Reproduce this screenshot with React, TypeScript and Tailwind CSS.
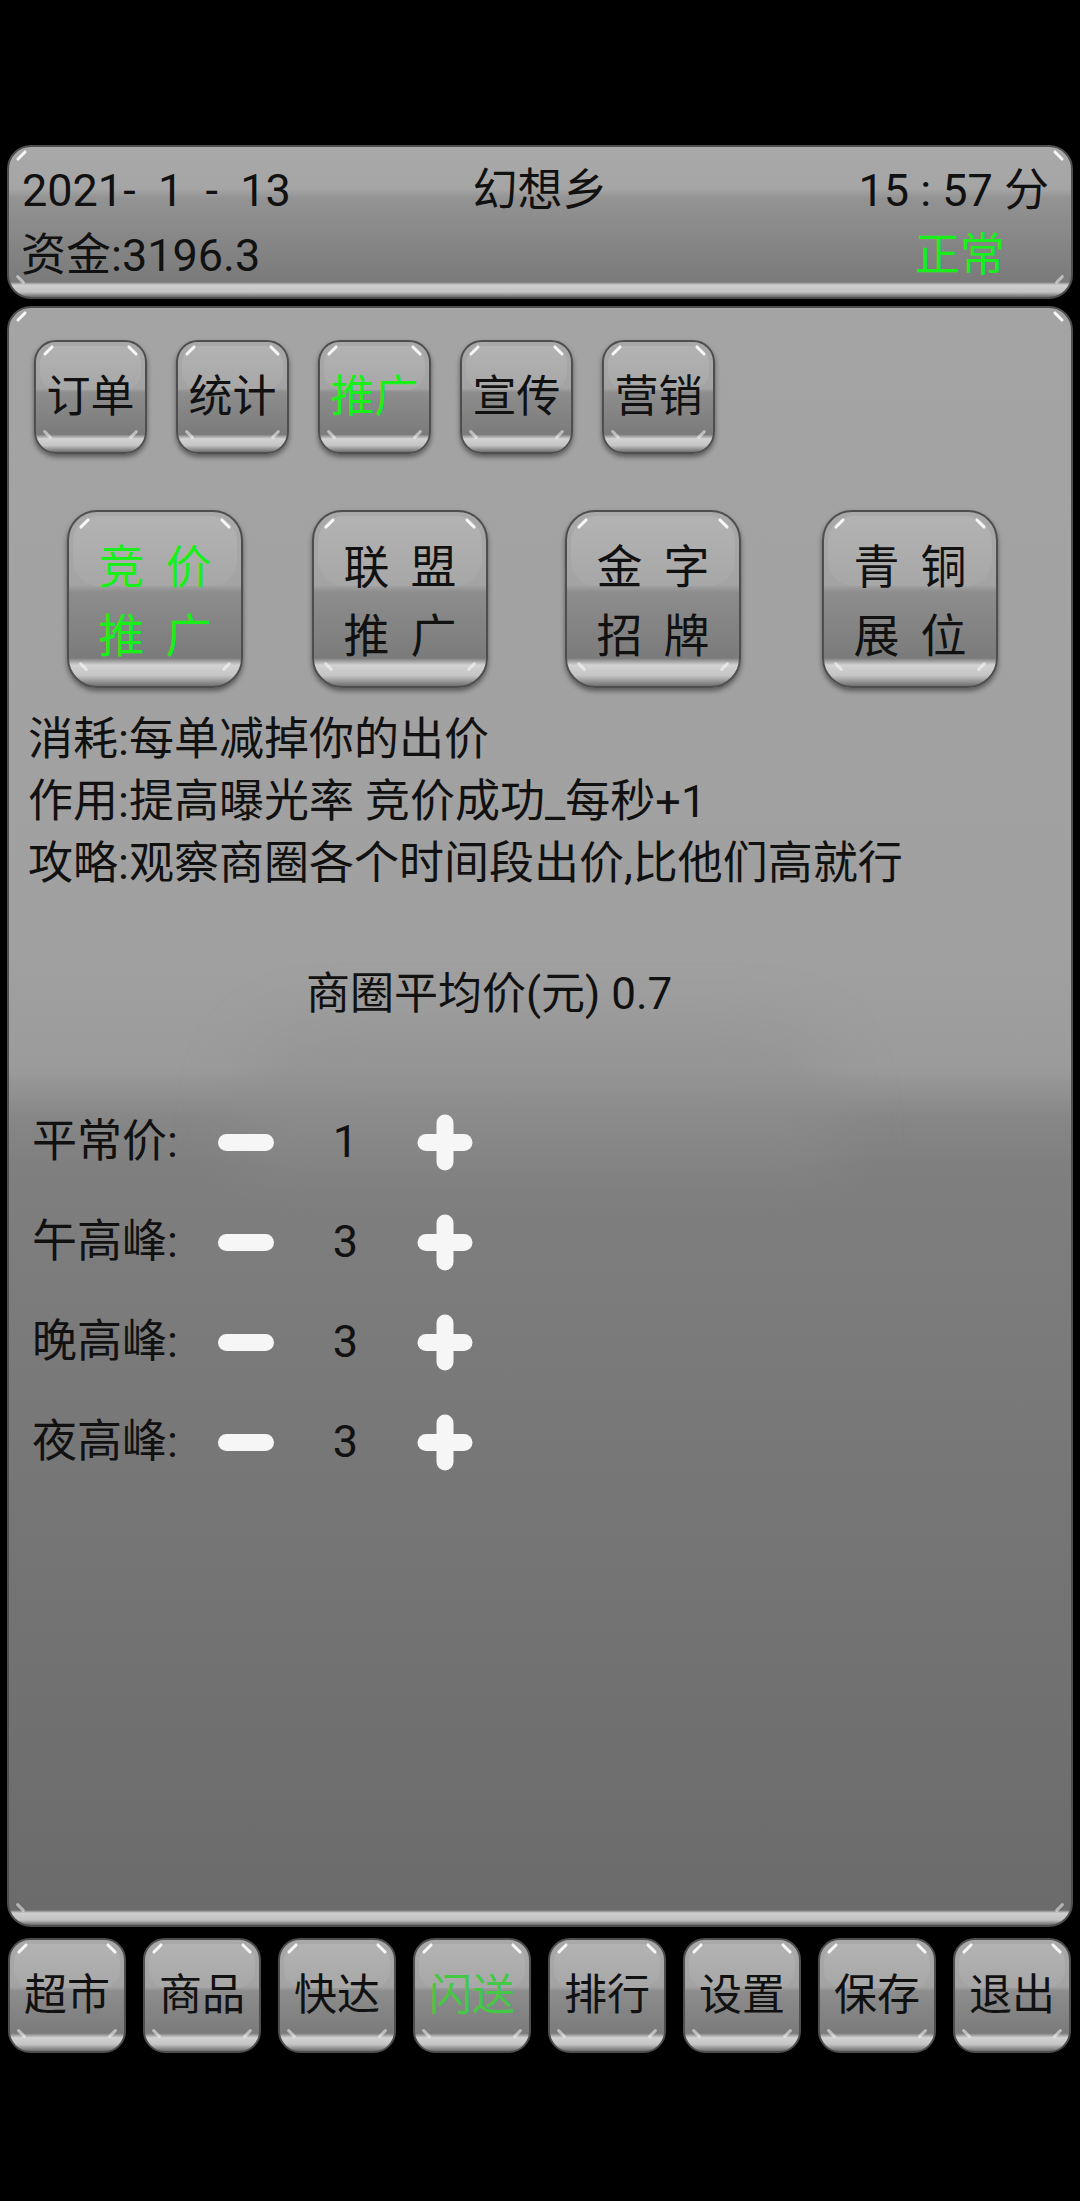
import { ReactNode } from 'react';
import clsx from 'clsx';

const GREEN = 'text-[#19f019]';

/** Little white slashes that sit on the rounded corners of the glossy skins */
function CornerShine({ big = false }: { big?: boolean }) {
  return (
    <>
      <div
        className={clsx(
          'absolute w-[13px] h-[3px] rounded-full -rotate-45 bg-white/90',
          big ? 'left-[9px] top-[10px]' : 'left-[6px] top-[7px]',
        )}
      />
      <div
        className={clsx(
          'absolute w-[13px] h-[3px] rounded-full rotate-45 bg-white/90',
          big ? 'right-[9px] top-[10px]' : 'right-[6px] top-[7px]',
        )}
      />
      <div
        className={clsx(
          'absolute w-[11px] h-[3px] rounded-full rotate-45 bg-white/50',
          big ? 'left-[9px] bottom-[18px]' : 'left-[6px] bottom-[16px]',
        )}
      />
      <div
        className={clsx(
          'absolute w-[11px] h-[3px] rounded-full -rotate-45 bg-white/50',
          big ? 'right-[9px] bottom-[18px]' : 'right-[6px] bottom-[16px]',
        )}
      />
    </>
  );
}

/** Glossy grey key used for every button in the game */
function GlossKey({
  children,
  className,
  big = false,
}: {
  children: ReactNode;
  className?: string;
  big?: boolean;
}) {
  return (
    <div
      className={clsx(
        'relative shrink-0 border-2 border-[#4e4e4e] shadow-[0_3px_5px_rgba(0,0,0,0.45)] overflow-hidden',
        'bg-[linear-gradient(to_bottom,#a9a9a9_0%,#a3a3a3_42%,#8d8d8d_46%,#7b7b7b_84%,#d2d2d2_88%,#c4c4c4_94%,#707070_100%)]',
        big ? 'rounded-[30px]' : 'rounded-[22px]',
        className,
      )}
    >
      <div
        className={clsx(
          'absolute inset-x-[4px] top-[4px] h-[40%] bg-[linear-gradient(to_bottom,#b3b3b3,#a7a7a7)]',
          big ? 'rounded-[26px]' : 'rounded-[18px]',
        )}
      />
      <CornerShine big={big} />
      <div className="relative h-full w-full flex flex-col items-center justify-center">{children}</div>
    </div>
  );
}

function Minus() {
  return <div className="w-[56px] h-[17px] rounded-full bg-[#f6f6f6]" />;
}

function Plus() {
  return (
    <svg width="56" height="57" viewBox="0 0 56 57">
      <g stroke="#f6f6f6" strokeWidth="17" strokeLinecap="round">
        <line x1="9" y1="28.5" x2="47" y2="28.5" />
        <line x1="28" y1="9" x2="28" y2="48" />
      </g>
    </svg>
  );
}

const tabs = ['订单', '统计', '推广', '宣传', '营销'];
const promos = [
  ['竞价', '推广'],
  ['联盟', '推广'],
  ['金字', '招牌'],
  ['青铜', '展位'],
];
const promoGap = ['ml-0', 'ml-[69px]', 'ml-[77px]', 'ml-[81px]'];
const prices = [
  { label: '平常价:', value: 1 },
  { label: '午高峰:', value: 3 },
  { label: '晚高峰:', value: 3 },
  { label: '夜高峰:', value: 3 },
];
const nav = ['超市', '商品', '快达', '闪送', '排行', '设置', '保存', '退出'];

function SpacedPair({ text }: { text: string }) {
  return (
    <div className="flex gap-[21px] h-[69px] items-center">
      {text.split('').map((c) => (
        <span key={c}>{c}</span>
      ))}
    </div>
  );
}

export default function App() {
  return (
    <div className="w-[1080px] h-[2201px] bg-black pt-[145px] px-[7px] font-['Roboto','Noto_Sans_CJK_SC',sans-serif] text-[#111]">
      {/* status header */}
      <div className="relative h-[154px] rounded-[24px] border-2 border-[#4e4e4e] overflow-hidden bg-[linear-gradient(to_bottom,#a9a9a9_0%,#a5a5a5_28%,#939393_34%,#7a7a7a_calc(100%_-_15px),#cfcfcf_calc(100%_-_12px),#c2c2c2_calc(100%_-_5px),#6a6a6a_100%)]">
        <CornerShine />
        <div className="relative grid grid-cols-3 items-center h-[60px] mt-[14px] px-[13px] text-[45px]">
          <span className="leading-[60px] whitespace-pre">2021-  1  -  13</span>
          <span className="leading-[60px] text-center">幻想乡</span>
          <span className="leading-[60px] text-right pr-[9px] whitespace-pre">15 : 57 分</span>
        </div>
        <div className="relative flex items-center justify-between h-[60px] mt-[5px] pl-[12px] pr-[66px] text-[45px]">
          <span className="leading-[60px]">资金:3196.3</span>
          <span className={clsx('leading-[60px]', GREEN)}>正常</span>
        </div>
      </div>

      {/* main panel */}
      <div className="relative mt-[7px] h-[1621px] rounded-[24px] border-2 border-[#4e4e4e] overflow-hidden bg-[linear-gradient(to_bottom,#a4a4a4_0%,#a0a0a0_40%,#9b9b9b_47%,#878787_50%,#7f7f7f_53%,#6b6b6b_calc(100%_-_15px),#cfcfcf_calc(100%_-_12px),#c2c2c2_calc(100%_-_5px),#6a6a6a_100%)]">
        <div className="absolute left-[230px] top-[720px] w-[600px] h-[140px] rounded-t-[80px] bg-[#8e8e8e] blur-[30px] opacity-50" />
        <CornerShine />

        <div className="relative flex gap-[29px] pl-[25px] pt-[32px]">
          {tabs.map((t) => (
            <GlossKey key={t} className="w-[113px] h-[114px]">
              <span className={clsx('text-[44px] leading-none', t === '推广' && GREEN)}>{t}</span>
            </GlossKey>
          ))}
        </div>

        <div className="relative flex pl-[58px] mt-[56px]">
          {promos.map((p, i) => (
            <GlossKey key={p[0]} big className={clsx('w-[176px] h-[178px]', promoGap[i])}>
              <div className={clsx('flex flex-col items-center text-[46px] leading-none mt-[4px]', i === 0 && GREEN)}>
                <SpacedPair text={p[0]} />
                <SpacedPair text={p[1]} />
              </div>
            </GlossKey>
          ))}
        </div>

        <div className="relative mt-[21px] pl-[19px] text-[45px] leading-[62px]">
          <p>消耗:每单减掉你的出价</p>
          <p>作用:提高曝光率 竞价成功_每秒+1</p>
          <p>攻略:观察商圈各个时间段出价,比他们高就行</p>
        </div>

        <div className="relative mt-[68px] pl-[297px] text-[44px] leading-[62px]">商圈平均价(元) 0.7</div>

        <div className="relative mt-[67px] pl-[23px]">
          {prices.map((r) => (
            <div key={r.label} className="flex items-center h-[100px]">
              <span className="w-[186px] text-[45px]">{r.label}</span>
              <Minus />
              <span className="w-[143px] text-center text-[45px]">{r.value}</span>
              <Plus />
            </div>
          ))}
        </div>
      </div>

      {/* bottom navigation */}
      <div className="flex gap-[17px] px-px mt-[11px]">
        {nav.map((n) => (
          <GlossKey key={n} className="w-[118px] h-[115px]">
            <span className={clsx('text-[43px] leading-none', n === '闪送' && 'text-[#45c845]')}>{n}</span>
          </GlossKey>
        ))}
      </div>
    </div>
  );
}
